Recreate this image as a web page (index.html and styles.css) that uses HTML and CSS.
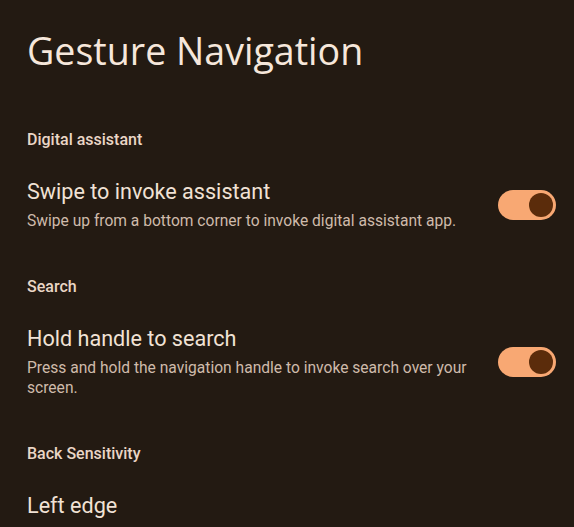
FILE: index.html
```html
<!DOCTYPE html>
<html lang="en">
<head>
<meta charset="utf-8">
<title>Gesture Navigation</title>
<link rel="stylesheet" href="styles.css">
</head>
<body>
<main class="page">
  <h1 class="title">Gesture Navigation</h1>

  <section class="group">
    <h2 class="group-label">Digital assistant</h2>
    <div class="row">
      <div class="row-text">
        <div class="row-title">Swipe to invoke assistant</div>
        <div class="row-sub">Swipe up from a bottom corner to invoke digital assistant app.</div>
      </div>
      <div class="switch"><span class="thumb"></span></div>
    </div>
  </section>

  <section class="group">
    <h2 class="group-label">Search</h2>
    <div class="row">
      <div class="row-text">
        <div class="row-title">Hold handle to search</div>
        <div class="row-sub">Press and hold the navigation handle to invoke search over your screen.</div>
      </div>
      <div class="switch"><span class="thumb"></span></div>
    </div>
  </section>

  <section class="group">
    <h2 class="group-label">Back Sensitivity</h2>
    <div class="row">
      <div class="row-text">
        <div class="row-title">Left edge</div>
      </div>
    </div>
  </section>
</main>
</body>
</html>
```

FILE: styles.css
```css
html, body {
  margin: 0;
  padding: 0;
  background: #231a12;
  height: 100%;
  overflow: hidden;
}

.page {
  padding: 28px 18px 0 27px;
  font-family: Roboto, "Liberation Sans", sans-serif;
  color: #f1e1d4;
}

.title {
  margin: 0;
  font-family: "Open Sans", Roboto, sans-serif;
  font-weight: 400;
  font-size: 37.6px;
  line-height: 46px;
  color: #f6e7db;
}

.group {
  display: flex;
  flex-direction: column;
}

.group-label {
  margin: 45px 0 0;
  font-size: 16px;
  font-weight: 500;
  line-height: 20px;
  color: #ead6c6;
}

.group:first-of-type .group-label {
  margin-top: 56px;
}

.row {
  display: flex;
  align-items: center;
  gap: 16px;
  margin-top: 29px;
}

.row-text {
  flex: 1;
  min-width: 0;
}

.row-title {
  font-size: 21.6px;
  line-height: 26px;
  color: #f1e2d5;
}

.row-sub {
  font-size: 15.6px;
  line-height: 20.5px;
  color: #cfbbab;
  margin-top: 6px;
}

.switch {
  flex: none;
  width: 58px;
  height: 30px;
  border-radius: 15px;
  background: #f8a873;
  display: flex;
  align-items: center;
  justify-content: flex-end;
  padding-right: 3px;
  box-sizing: border-box;
}

.thumb {
  width: 24px;
  height: 24px;
  border-radius: 50%;
  background: #5b2c0b;
}
```
